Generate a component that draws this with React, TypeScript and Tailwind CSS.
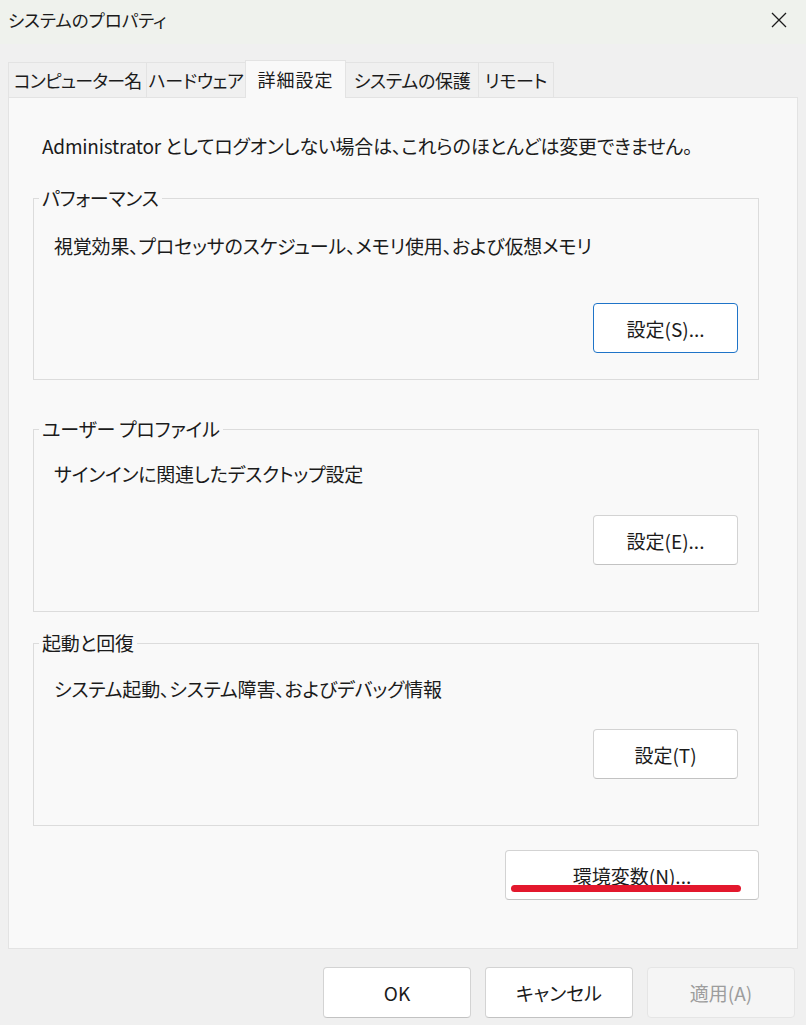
import React from "react";

const font = "font-['Yu_Gothic_UI','Noto_Sans_CJK_JP',sans-serif] [font-feature-settings:'palt']";

const tabs = [
  { label: "コンピューター名", w: "w-[139px] tracking-[-0.8px]" },
  { label: "ハードウェア", w: "w-[100px] tracking-[-0.3px]" },
  { label: "詳細設定", w: "w-[101px] tracking-[1px]", active: true },
  { label: "システムの保護", w: "w-[134px] tracking-[-0.3px]" },
  { label: "リモート", w: "w-[76px] tracking-[-0.3px]" },
];

const Button: React.FC<{ label: string; className?: string; focused?: boolean; disabled?: boolean }> = ({
  label,
  className = "",
  focused,
  disabled,
}) => (
  <button
    className={
      "h-[50px] rounded-[4px] text-[19px] leading-none flex items-center justify-center " +
      (disabled
        ? "bg-[#f5f5f5] border border-[#e5e5e5] text-[#9d9d9d] "
        : focused
        ? "bg-white border border-[#1f74c8] text-[#1b1b1b] "
        : "bg-white border border-[#d3d3d3] border-b-[#c2c2c2] text-[#1b1b1b] ") +
      className
    }
  >
    {label}
  </button>
);

const Group: React.FC<{
  legend: string;
  text: string;
  button: string;
  focused?: boolean;
  className: string;
  textPad: string;
  btnGap: string;
}> = ({ legend, text, button, focused, className, textPad, btnGap }) => (
  <fieldset className={"ml-[24px] w-[726px] border border-[#dcdcdc] pl-[5px] pr-[20px] min-w-0 " + className}>
    <legend className="px-[3px] text-[19px] tracking-[-0.2px] leading-[28px] text-[#1b1b1b]">{legend}</legend>
    <div className={"pl-[15px] text-[19px] tracking-[-0.2px] leading-[28px] text-[#1b1b1b] " + textPad}>{text}</div>
    <div className={"flex justify-end " + btnGap}>
      <Button label={button} focused={focused} className="w-[145px]" />
    </div>
  </fieldset>
);

export default function App() {
  return (
    <div className={"w-[806px] h-[1025px] bg-[#f0f0f0] flex flex-col overflow-hidden " + font}>
      {/* title bar */}
      <div className="h-[44px] bg-[#eff2ed] flex items-center justify-between pl-[8px] pr-[19px] shrink-0">
        <span className="text-[17.5px] text-[#1b1b1b] leading-none pb-[4px]">システムのプロパティ</span>
        <svg width="16" height="16" viewBox="0 0 16 16" className="mb-[4px]">
          <path d="M1 1 L15 15 M15 1 L1 15" stroke="#1b1b1b" strokeWidth="1.3" fill="none" />
        </svg>
      </div>

      {/* tabs */}
      <div className="mt-[16px] px-[8px] flex items-end h-[37px] shrink-0 relative z-10">
        {tabs.map((t, i) => (
          <div
            key={t.label}
            className={
              "whitespace-nowrap flex items-center justify-center text-[18px] text-[#1b1b1b] border border-[#e3e3e3] border-b-0 " +
              (t.active ? "h-[38px] -mb-px bg-[#f9f9f9] " : "h-[35px] bg-[#f0f0f0] ") +
              t.w +
              (i > 0 ? " -ml-px" : "")
            }
          >
            {t.label}
          </div>
        ))}
      </div>

      {/* panel */}
      <div className="mx-[8px] h-[852px] bg-[#f9f9f9] border border-[#e3e3e3] shrink-0 flex flex-col">
        <div className="pt-[34px] pl-[33px] text-[19px] tracking-[-0.2px] leading-[28px] text-[#1b1b1b]">
          Administrator としてログオンしない場合は、これらのほとんどは変更できません。
        </div>

        <Group
          legend="パフォーマンス"
          text="視覚効果、プロセッサのスケジュール、メモリ使用、および仮想メモリ"
          button="設定(S)..."
          focused
          className="mt-[24px] pb-[26px]"
          textPad="pt-[20px]"
          btnGap="mt-[43px]"
        />
        <Group
          legend="ユーザー プロファイル"
          text="サインインに関連したデスクトップ設定"
          button="設定(E)..."
          className="mt-[35px] pb-[46px]"
          textPad="pt-[17px]"
          btnGap="mt-[27px]"
        />
        <Group
          legend="起動と回復"
          text="システム起動、システム障害、およびデバッグ情報"
          button="設定(T)"
          className="mt-[17px] pb-[46px]"
          textPad="pt-[18px]"
          btnGap="mt-[26px]"
        />

        <div className="mt-[24px] ml-[496px] w-[254px] relative">
          <Button label="環境変数(N)..." className="w-[254px]" />
          {/* red annotation underline */}
          <div className="absolute left-[6px] top-[35px] w-[230px] h-[7px] rounded-full bg-[#e3182d]" />
        </div>
      </div>

      {/* bottom buttons */}
      <div className="mt-[18px] flex justify-end gap-[14px] pr-[11px]">
        <Button label="OK" className="w-[148px] h-[51px]" />
        <Button label="キャンセル" className="w-[148px] h-[51px]" />
        <Button label="適用(A)" disabled className="w-[148px] h-[51px]" />
      </div>
    </div>
  );
}
